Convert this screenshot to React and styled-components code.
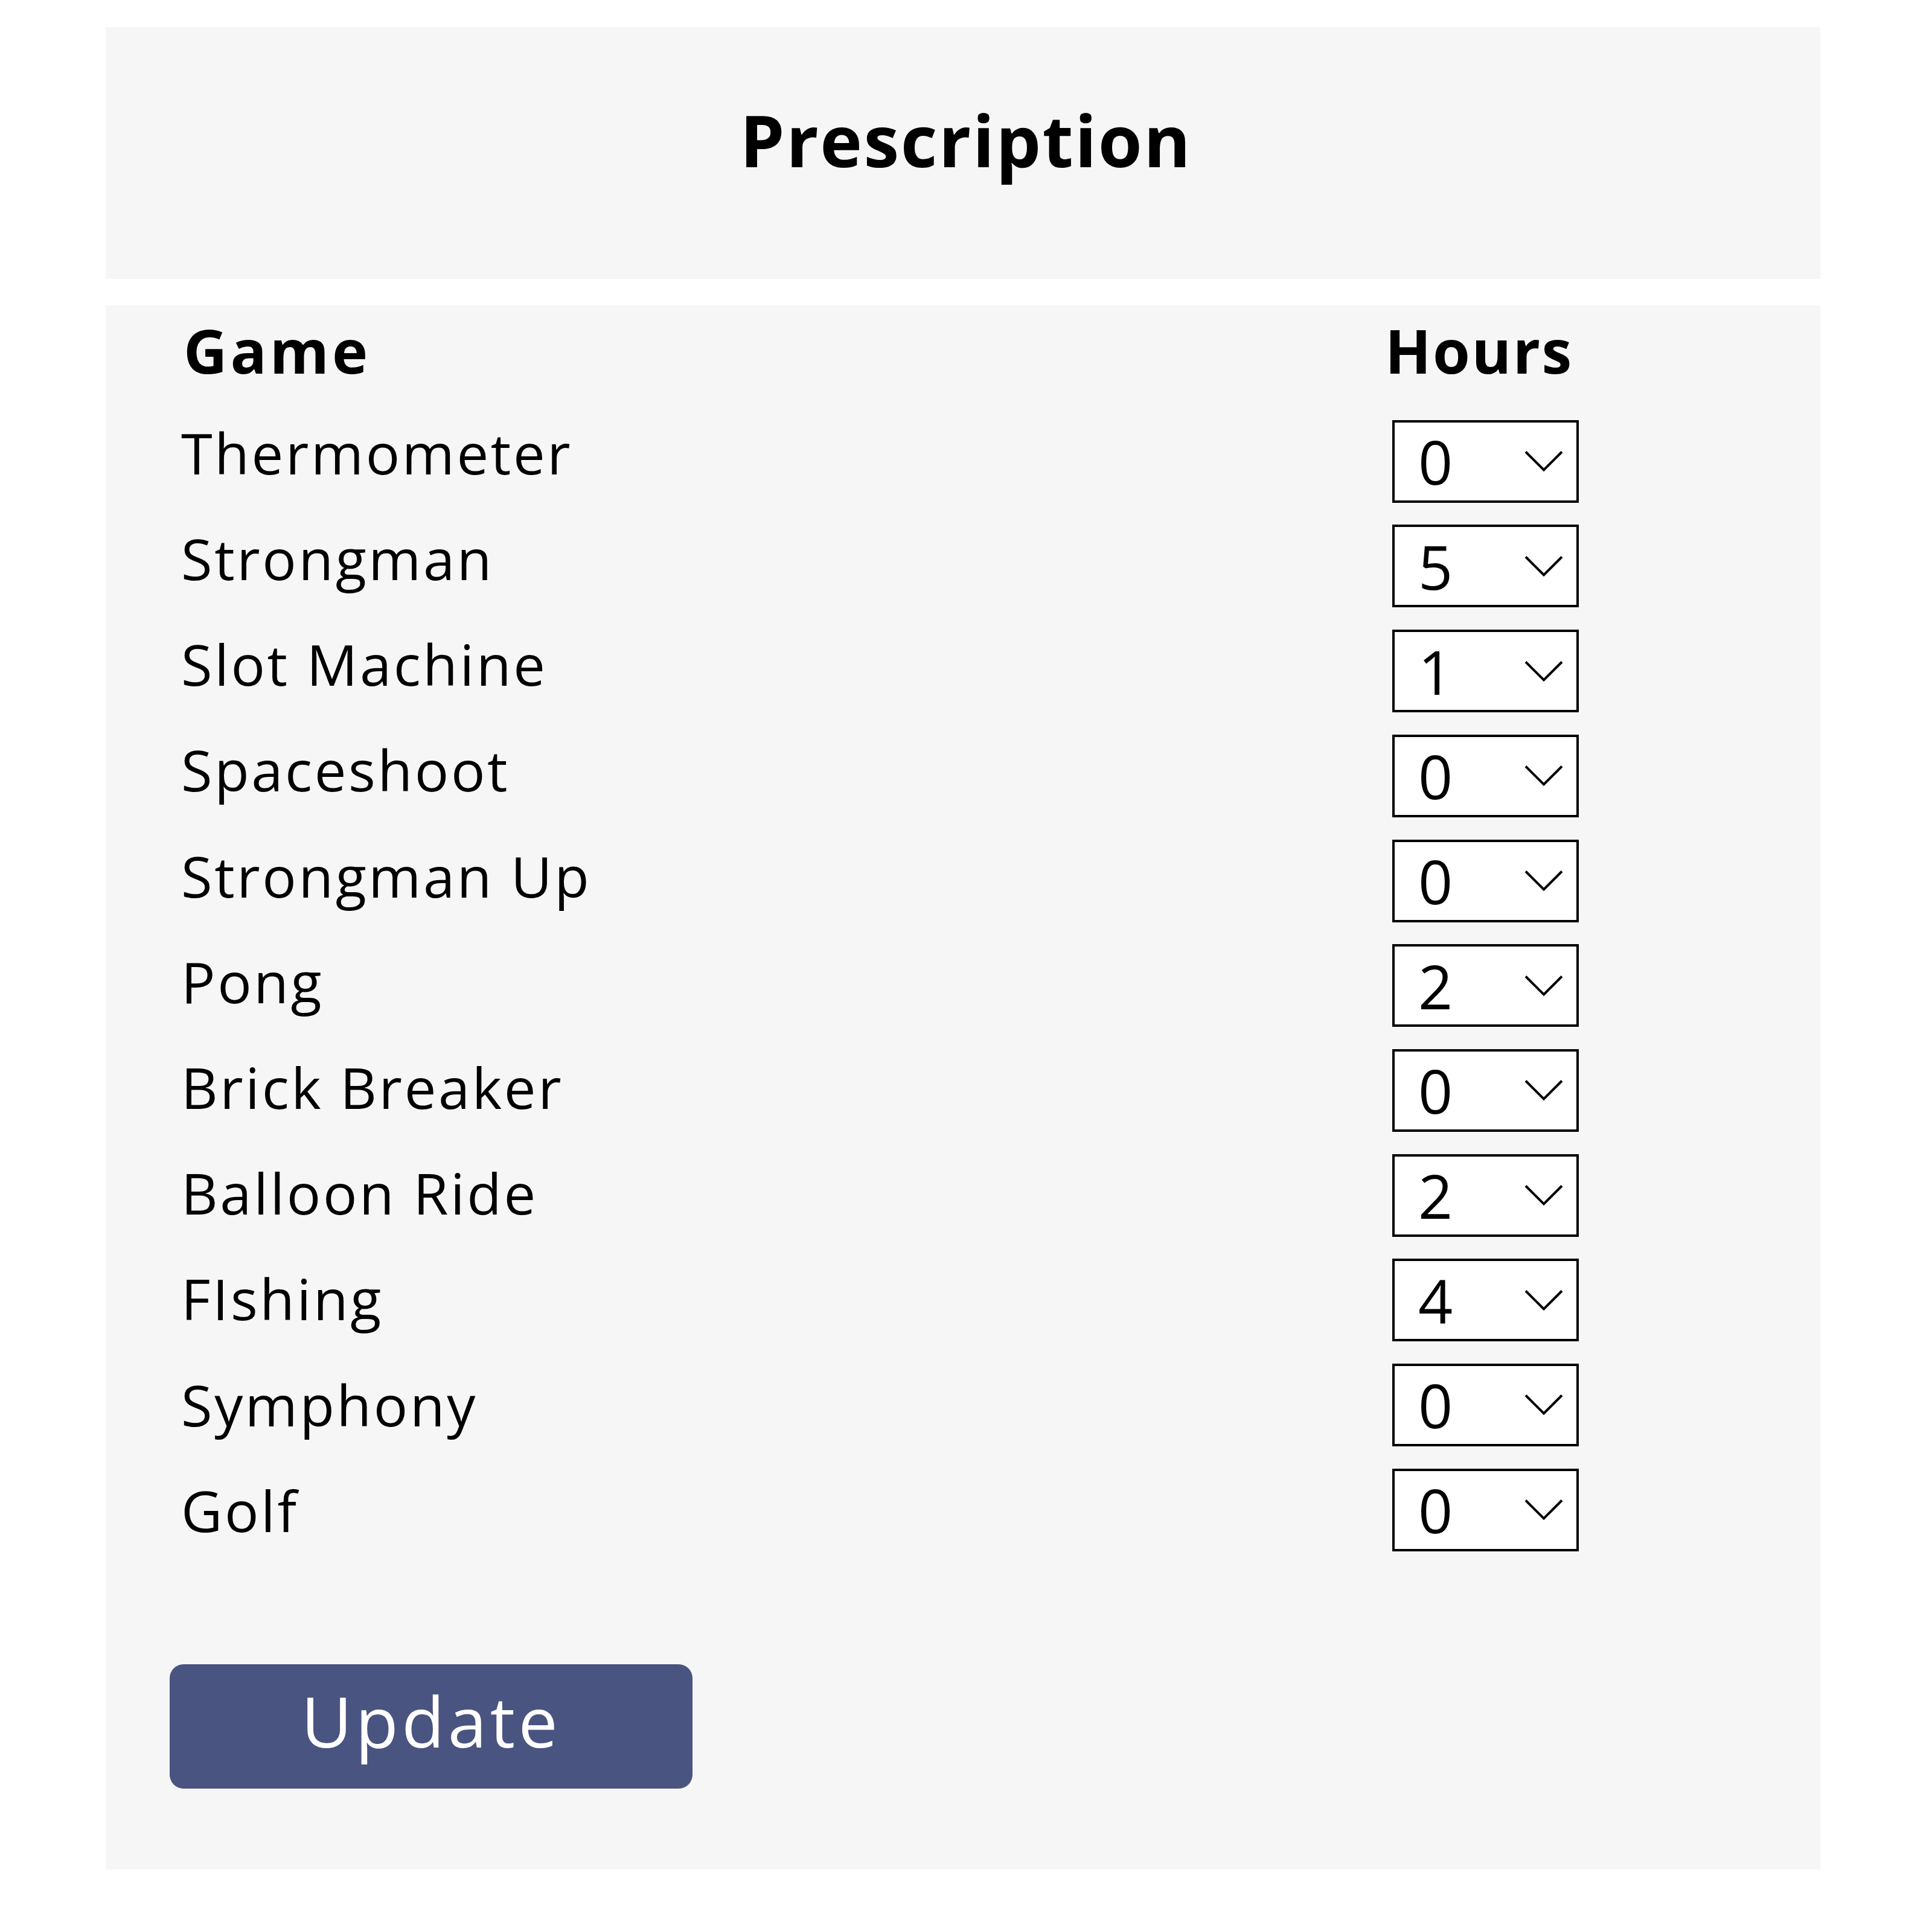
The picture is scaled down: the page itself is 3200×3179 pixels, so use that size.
import React, { useState } from 'react';
import styled, { createGlobalStyle } from 'styled-components';

const GlobalStyle = createGlobalStyle`
  html, body {
    margin: 0;
    padding: 0;
    background: #ffffff;
  }
  body {
    font-family: "Open Sans", "Noto Sans", "Liberation Sans", sans-serif;
    color: #000000;
  }
`;

const Page = styled.div`
  display: flex;
  flex-direction: column;
  gap: 44px;
  padding: 45px 185px 81px 175px;
`;

const Panel = styled.section`
  box-sizing: border-box;
  width: 2840px;
  background: #f6f6f6;
`;

const TitlePanel = styled(Panel)`
  height: 417px;
  padding: 106px 0 0 10px;
  text-align: center;
`;

const Title = styled.h1`
  margin: 0;
  font-size: 118px;
  font-weight: 700;
  line-height: normal;
  letter-spacing: 2.5px;
`;

const TablePanel = styled(Panel)`
  height: 2591px;
  padding: 14px 0 0 106px;
`;

const Columns = styled.div`
  display: grid;
  grid-template-columns: 1994px auto;
  padding-left: 19px;
`;

const Column = styled.div`
  display: flex;
  flex-direction: column;
  align-items: flex-start;
`;

const ColumnHead = styled.h2`
  margin: 0 0 0 ${(props) => props.$indent || 0}px;
  font-size: 100px;
  font-weight: 700;
  line-height: 120px;
  letter-spacing: ${(props) => props.$spacing || 2}px;
`;

const LabelList = styled.ul`
  list-style: none;
  margin: 22.7px 0 0;
  padding: 0;
`;

const Label = styled.li`
  font-size: 94px;
  font-weight: 400;
  line-height: 175.2px;
  letter-spacing: 3.6px;
  white-space: nowrap;
`;

const SelectList = styled.div`
  display: flex;
  flex-direction: column;
  gap: 36.7px;
  margin: 55.8px 0 0 12px;
`;

const SelectWrap = styled.div`
  position: relative;
  width: 309px;
  height: 137px;
`;

const HourSelect = styled.select`
  appearance: none;
  -webkit-appearance: none;
  box-sizing: border-box;
  width: 100%;
  height: 100%;
  margin: 0;
  padding: 0 0 0 39px;
  border: 4px solid #000000;
  border-radius: 0;
  background: #ffffff;
  color: #000000;
  font-family: "Open Sans", "Noto Sans", sans-serif;
  font-size: 100px;
  font-weight: 400;
  line-height: 116px;
  letter-spacing: 4px;
  outline: none;
`;

const Chevron = styled.svg`
  position: absolute;
  right: 26px;
  top: 50%;
  transform: translateY(-50%);
  pointer-events: none;
`;

const UpdateButton = styled.button`
  display: block;
  box-sizing: border-box;
  width: 866px;
  height: 206px;
  margin-top: 167px;
  padding: 0 0 20px;
  border: none;
  border-radius: 23px;
  background: #4a5480;
  color: #ffffff;
  font-family: "Open Sans", "Noto Sans", sans-serif;
  font-size: 116px;
  font-weight: 400;
  letter-spacing: 5.5px;
  cursor: pointer;
`;

const initialRows = [
  { game: 'Thermometer', hours: 0 },
  { game: 'Strongman', hours: 5 },
  { game: 'Slot Machine', hours: 1 },
  { game: 'Spaceshoot', hours: 0 },
  { game: 'Strongman Up', hours: 0 },
  { game: 'Pong', hours: 2 },
  { game: 'Brick Breaker', hours: 0 },
  { game: 'Balloon Ride', hours: 2 },
  { game: 'FIshing', hours: 4 },
  { game: 'Symphony', hours: 0 },
  { game: 'Golf', hours: 0 },
];

const hourOptions = [0, 1, 2, 3, 4, 5, 6, 7, 8];

const HoursPicker = ({ value, onChange }) => (
  <SelectWrap>
    <HourSelect value={value} onChange={(e) => onChange(Number(e.target.value))}>
      {hourOptions.map((h) => (
        <option key={h} value={h}>{h}</option>
      ))}
    </HourSelect>
    <Chevron width="64" height="35" viewBox="0 0 64 35" fill="none">
      <polyline points="2,2 32,32 62,2" stroke="#000" strokeWidth="4" />
    </Chevron>
  </SelectWrap>
);

export default function App() {
  const [rows, setRows] = useState(initialRows);

  const setHours = (index, hours) => {
    setRows((prev) => prev.map((r, i) => (i === index ? { ...r, hours } : r)));
  };

  return (
    <>
      <GlobalStyle />
      <Page>
        <TitlePanel>
          <Title>Prescription</Title>
        </TitlePanel>
        <TablePanel>
          <Columns>
            <Column>
              <ColumnHead $indent={4} $spacing={5}>Game</ColumnHead>
              <LabelList>
                {rows.map((r) => (
                  <Label key={r.game}>{r.game}</Label>
                ))}
              </LabelList>
            </Column>
            <Column>
              <ColumnHead $spacing={2.5}>Hours</ColumnHead>
              <SelectList>
                {rows.map((r, i) => (
                  <HoursPicker key={r.game} value={r.hours} onChange={(h) => setHours(i, h)} />
                ))}
              </SelectList>
            </Column>
          </Columns>
          <UpdateButton type="button">Update</UpdateButton>
        </TablePanel>
      </Page>
    </>
  );
}
